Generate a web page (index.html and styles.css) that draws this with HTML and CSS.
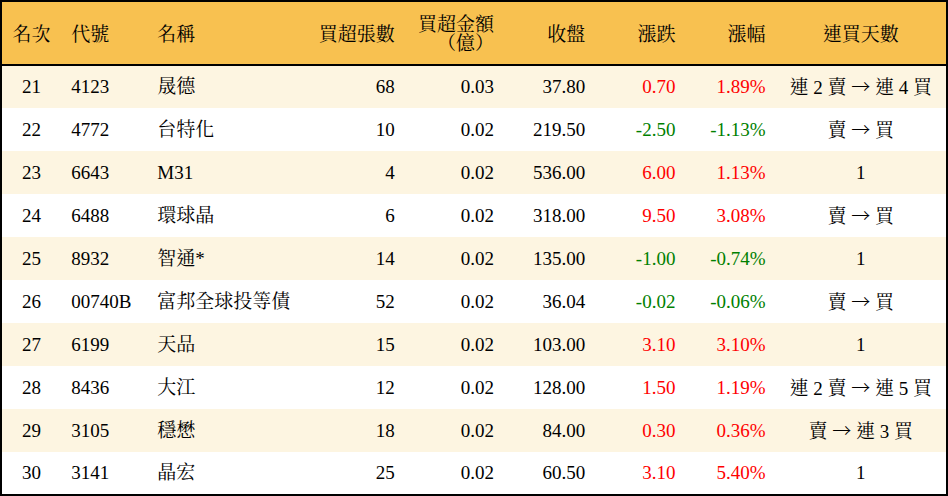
FILE: index.html
```html
<!DOCTYPE html>
<html lang="zh-Hant">
<head>
<meta charset="utf-8">
<title>買超排行</title>
<link rel="stylesheet" href="styles.css">
</head>
<body>
<table class="rank">
  <colgroup>
    <col class="c-rank"><col class="c-code"><col class="c-name"><col class="c-vol"><col class="c-amt"><col class="c-close"><col class="c-chg"><col class="c-pct"><col class="c-days">
  </colgroup>
  <thead>
    <tr>
      <th class="center">名次</th>
      <th class="left">代號</th>
      <th class="left">名稱</th>
      <th class="right">買超張數</th>
      <th class="right">買超金額<br>（億）</th>
      <th class="right">收盤</th>
      <th class="right">漲跌</th>
      <th class="right">漲幅</th>
      <th class="center">連買天數</th>
    </tr>
  </thead>
  <tbody>
    <tr class="odd"><td class="center">21</td><td>4123</td><td>晟德</td><td class="right">68</td><td class="right">0.03</td><td class="right">37.80</td><td class="right up">0.70</td><td class="right up">1.89%</td><td class="center">連 2 賣 <span class="arrow">→</span> 連 4 買</td></tr>
    <tr><td class="center">22</td><td>4772</td><td>台特化</td><td class="right">10</td><td class="right">0.02</td><td class="right">219.50</td><td class="right down">-2.50</td><td class="right down">-1.13%</td><td class="center">賣 <span class="arrow">→</span> 買</td></tr>
    <tr class="odd"><td class="center">23</td><td>6643</td><td>M31</td><td class="right">4</td><td class="right">0.02</td><td class="right">536.00</td><td class="right up">6.00</td><td class="right up">1.13%</td><td class="center">1</td></tr>
    <tr><td class="center">24</td><td>6488</td><td>環球晶</td><td class="right">6</td><td class="right">0.02</td><td class="right">318.00</td><td class="right up">9.50</td><td class="right up">3.08%</td><td class="center">賣 <span class="arrow">→</span> 買</td></tr>
    <tr class="odd"><td class="center">25</td><td>8932</td><td>智通*</td><td class="right">14</td><td class="right">0.02</td><td class="right">135.00</td><td class="right down">-1.00</td><td class="right down">-0.74%</td><td class="center">1</td></tr>
    <tr><td class="center">26</td><td>00740B</td><td>富邦全球投等債</td><td class="right">52</td><td class="right">0.02</td><td class="right">36.04</td><td class="right down">-0.02</td><td class="right down">-0.06%</td><td class="center">賣 <span class="arrow">→</span> 買</td></tr>
    <tr class="odd"><td class="center">27</td><td>6199</td><td>天品</td><td class="right">15</td><td class="right">0.02</td><td class="right">103.00</td><td class="right up">3.10</td><td class="right up">3.10%</td><td class="center">1</td></tr>
    <tr><td class="center">28</td><td>8436</td><td>大江</td><td class="right">12</td><td class="right">0.02</td><td class="right">128.00</td><td class="right up">1.50</td><td class="right up">1.19%</td><td class="center">連 2 賣 <span class="arrow">→</span> 連 5 買</td></tr>
    <tr class="odd"><td class="center">29</td><td>3105</td><td>穩懋</td><td class="right">18</td><td class="right">0.02</td><td class="right">84.00</td><td class="right up">0.30</td><td class="right up">0.36%</td><td class="center">賣 <span class="arrow">→</span> 連 3 買</td></tr>
    <tr><td class="center">30</td><td>3141</td><td>晶宏</td><td class="right">25</td><td class="right">0.02</td><td class="right">60.50</td><td class="right up">3.10</td><td class="right up">5.40%</td><td class="center">1</td></tr>
  </tbody>
</table>
</body>
</html>
```
FILE: styles.css
```css
html, body {
  margin: 0;
  padding: 0;
  background: #ffffff;
}

body {
  font-family: "Liberation Serif", "Noto Serif CJK TC", "Noto Sans CJK TC", serif;
  font-size: 19px;
  color: #000000;
}

.rank {
  width: 948px;
  border-collapse: collapse;
  table-layout: fixed;
  border: 2px solid #000000;
}

.c-rank { width: 60px; }
.c-code { width: 86px; }
.c-name { width: 157px; }
.c-vol { width: 100px; }
.c-amt { width: 99px; }
.c-close { width: 91px; }
.c-chg { width: 90px; }
.c-pct { width: 90px; }
.c-days { width: 171px; }

.rank thead tr {
  background: #f8c150;
  height: 64px;
  border-bottom: 2px solid #000000;
}

.rank th {
  font-weight: normal;
  line-height: 19px;
  padding: 2px 10px 0;
  vertical-align: middle;
  white-space: nowrap;
}

.rank td {
  height: 43px;
  padding: 0 10px;
  vertical-align: middle;
  line-height: 20px;
  white-space: nowrap;
  box-sizing: border-box;
}

.rank tbody tr {
  height: 43px;
}

.rank tr.odd {
  background: #fdf5e1;
}

.arrow {
  font-family: "Noto Sans CJK TC", sans-serif;
  font-weight: 300;
}

.left { text-align: left; }
.right { text-align: right; }
.center { text-align: center; }

.up { color: #ff0000; }
.down { color: #008000; }
```
